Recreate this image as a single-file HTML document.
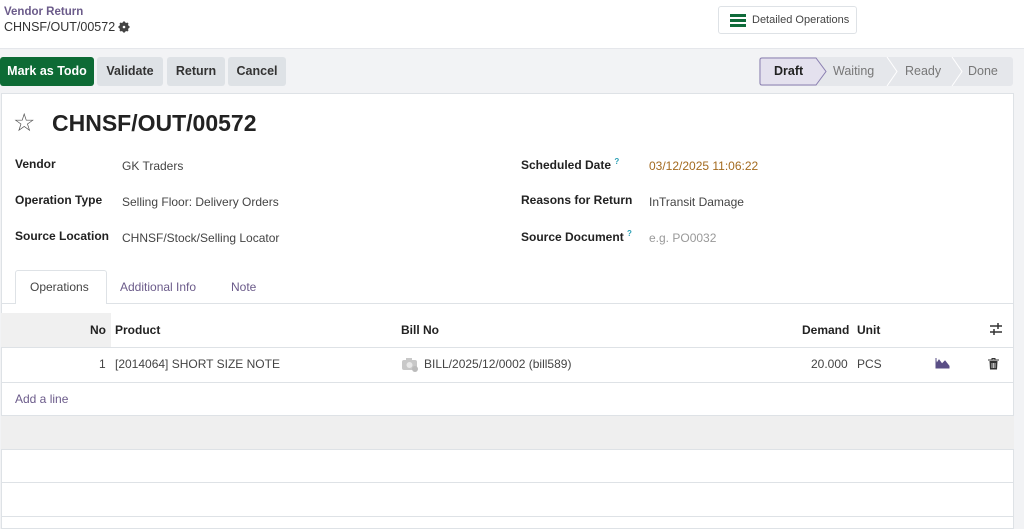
<!DOCTYPE html>
<html><head><meta charset="utf-8"><style>
*{box-sizing:border-box;margin:0;padding:0}
body{width:1024px;height:529px;overflow:hidden;background:#f2f3f5;font-family:"Liberation Sans",sans-serif;font-size:12.5px;color:#374151;position:relative}
.abs{position:absolute}
.hdr{left:0;top:0;width:1024px;height:49px;background:#fff;border-bottom:1px solid #e5e7eb}
.btn{position:absolute;top:57px;height:29px;line-height:29px;border-radius:3px;background:#dee2e6;color:#333;font-weight:bold;font-size:12.5px;text-align:center}
.sheet{left:1px;top:93px;width:1013px;height:436px;background:#fff;border:1px solid #dee2e6}
.lbl{position:absolute;font-weight:bold;color:#222;font-size:12px}
.val{position:absolute;color:#444;font-size:12px}
.line{position:absolute;left:1px;width:1013px;height:1px;background:#dee2e6}
</style></head><body>
<div class="abs hdr">
 <div class="abs" style="left:4px;top:6px;color:#6b5b8a;font-size:11.5px;font-weight:bold">Vendor Return</div>
 <div class="abs" style="left:4px;top:20px;color:#333;font-size:12.5px">CHNSF/OUT/00572</div>
 <svg class="abs" style="left:118px;top:21px" width="12" height="12" viewBox="0 0 12 12"><circle cx="6" cy="6" r="3.6" fill="none" stroke="#444" stroke-width="2.4"/><path d="M6 0.5V11.5M0.5 6H11.5M2.1 2.1L9.9 9.9M9.9 2.1L2.1 9.9" stroke="#444" stroke-width="2"/><circle cx="6" cy="6" r="1.3" fill="#fff"/></svg>
 <div class="abs" style="left:718px;top:6px;width:139px;height:28px;border:1px solid #dee2e6;border-radius:3px;background:#fff">
  <div class="abs" style="left:11px;top:7px;width:16px;height:3px;background:#0f6b3a;box-shadow:0 5px 0 #0f6b3a,0 10px 0 #0f6b3a"></div>
  <div class="abs" style="left:33px;top:7px;font-size:11px;color:#444">Detailed Operations</div>
 </div>
</div>
<div class="btn" style="left:0;width:94px;background:#0d6b35;color:#fff">Mark as Todo</div>
<div class="btn" style="left:97px;width:66px">Validate</div>
<div class="btn" style="left:167px;width:58px">Return</div>
<div class="btn" style="left:228px;width:58px">Cancel</div>
<div class="abs" style="left:759px;top:57px;width:254px;height:29px;background:#e5e7eb;border-radius:3px"></div>
<svg class="abs" style="left:759px;top:57px" width="254" height="29"><path d="M1 3Q1 1 3 1H57L67 14.5L57 28H3Q1 28 1 26Z" fill="#e4e1ee" stroke="#8a7fb0"/><path d="M128 0L138 14.5L128 29M193 0L203 14.5L193 29" fill="none" stroke="#fff"/></svg>
<div class="abs" style="left:774px;top:64px;font-weight:bold;color:#222;font-size:12.5px">Draft</div>
<div class="abs" style="left:833px;top:64px;color:#777;font-size:12.5px">Waiting</div>
<div class="abs" style="left:905px;top:64px;color:#777;font-size:12.5px">Ready</div>
<div class="abs" style="left:968px;top:64px;color:#777;font-size:12.5px">Done</div>
<div class="abs sheet"></div>
<div class="abs" style="left:13px;top:108px;font-size:25px;color:#555">☆</div>
<div class="abs" style="left:52px;top:110px;font-size:23px;font-weight:bold;color:#222">CHNSF/OUT/00572</div>
<div class="lbl" style="left:15px;top:157px">Vendor</div><div class="val" style="left:122px;top:159px">GK Traders</div>
<div class="lbl" style="left:15px;top:193px">Operation Type</div><div class="val" style="left:122px;top:195px">Selling Floor: Delivery Orders</div>
<div class="lbl" style="left:15px;top:229px">Source Location</div><div class="val" style="left:122px;top:231px">CHNSF/Stock/Selling Locator</div>
<div class="lbl" style="left:521px;top:157px">Scheduled Date <sup style="color:#2a9fb5;font-size:8px">?</sup></div><div class="val" style="left:649px;top:159px;color:#a36a1f">03/12/2025 11:06:22</div>
<div class="lbl" style="left:521px;top:193px">Reasons for Return</div><div class="val" style="left:649px;top:195px">InTransit Damage</div>
<div class="lbl" style="left:521px;top:229px">Source Document <sup style="color:#2a9fb5;font-size:8px">?</sup></div><div class="val" style="left:649px;top:231px;color:#999">e.g. PO0032</div>
<div class="line" style="top:303px"></div>
<div class="abs" style="left:15px;top:270px;width:92px;height:34px;background:#fff;border:1px solid #dee2e6;border-bottom:none;border-radius:3px 3px 0 0"></div>
<div class="abs" style="left:30px;top:280px;font-size:12px;color:#444">Operations</div>
<div class="abs" style="left:120px;top:280px;font-size:12px;color:#6b5b8a">Additional Info</div>
<div class="abs" style="left:231px;top:280px;font-size:12px;color:#6b5b8a">Note</div>
<div class="abs" style="left:1px;top:313px;width:110px;height:34px;background:#f0f0f0"></div>
<div class="lbl" style="left:90px;top:323px">No</div>
<div class="lbl" style="left:115px;top:323px">Product</div>
<div class="lbl" style="left:401px;top:323px">Bill No</div>
<div class="lbl" style="left:802px;top:323px">Demand</div>
<div class="lbl" style="left:857px;top:323px">Unit</div>
<svg class="abs" style="left:990px;top:322px" width="12" height="14"><path d="M0 4H12M0 10H12" stroke="#333" stroke-width="1.5"/><path d="M8 1V7M4 7V13" stroke="#333" stroke-width="1.5"/></svg>
<div class="line" style="top:347px"></div>
<div class="val" style="left:99px;top:357px">1</div>
<div class="val" style="left:115px;top:357px">[2014064] SHORT SIZE NOTE</div>
<svg class="abs" style="left:402px;top:357px" width="17" height="15"><rect x="0" y="3" width="15" height="10" rx="2" fill="#c8c8c8"/><rect x="4" y="1" width="6" height="3" fill="#c8c8c8"/><circle cx="7.5" cy="8" r="3" fill="#e8e8e8"/><circle cx="13" cy="12" r="3" fill="#bbb"/></svg>
<div class="val" style="left:424px;top:357px">BILL/2025/12/0002 (bill589)</div>
<div class="val" style="left:811px;top:357px">20.000</div>
<div class="val" style="left:857px;top:357px">PCS</div>
<svg class="abs" style="left:935px;top:357px" width="15" height="12"><path d="M1 1V11H14V9L10 4L7 7L4 3L2 6" fill="#5a4f86" stroke="#5a4f86"/></svg>
<svg class="abs" style="left:988px;top:358px" width="11" height="12"><path d="M0 2H11M4 2V0.5H7V2" stroke="#333" fill="none"/><path d="M1.5 3H9.5L9 11.5H2Z" fill="#333"/><path d="M4 5V10M5.5 5V10M7 5V10" stroke="#fff" stroke-width="0.7"/></svg>
<div class="line" style="top:382px"></div>
<div class="abs" style="left:15px;top:392px;font-size:12px;color:#6b5b8a">Add a line</div>
<div class="line" style="top:415px"></div>
<div class="abs" style="left:1px;top:416px;width:1013px;height:33px;background:#efefef"></div>
<div class="line" style="top:449px"></div>
<div class="line" style="top:482px"></div>
<div class="line" style="top:516px"></div>
</body></html>
